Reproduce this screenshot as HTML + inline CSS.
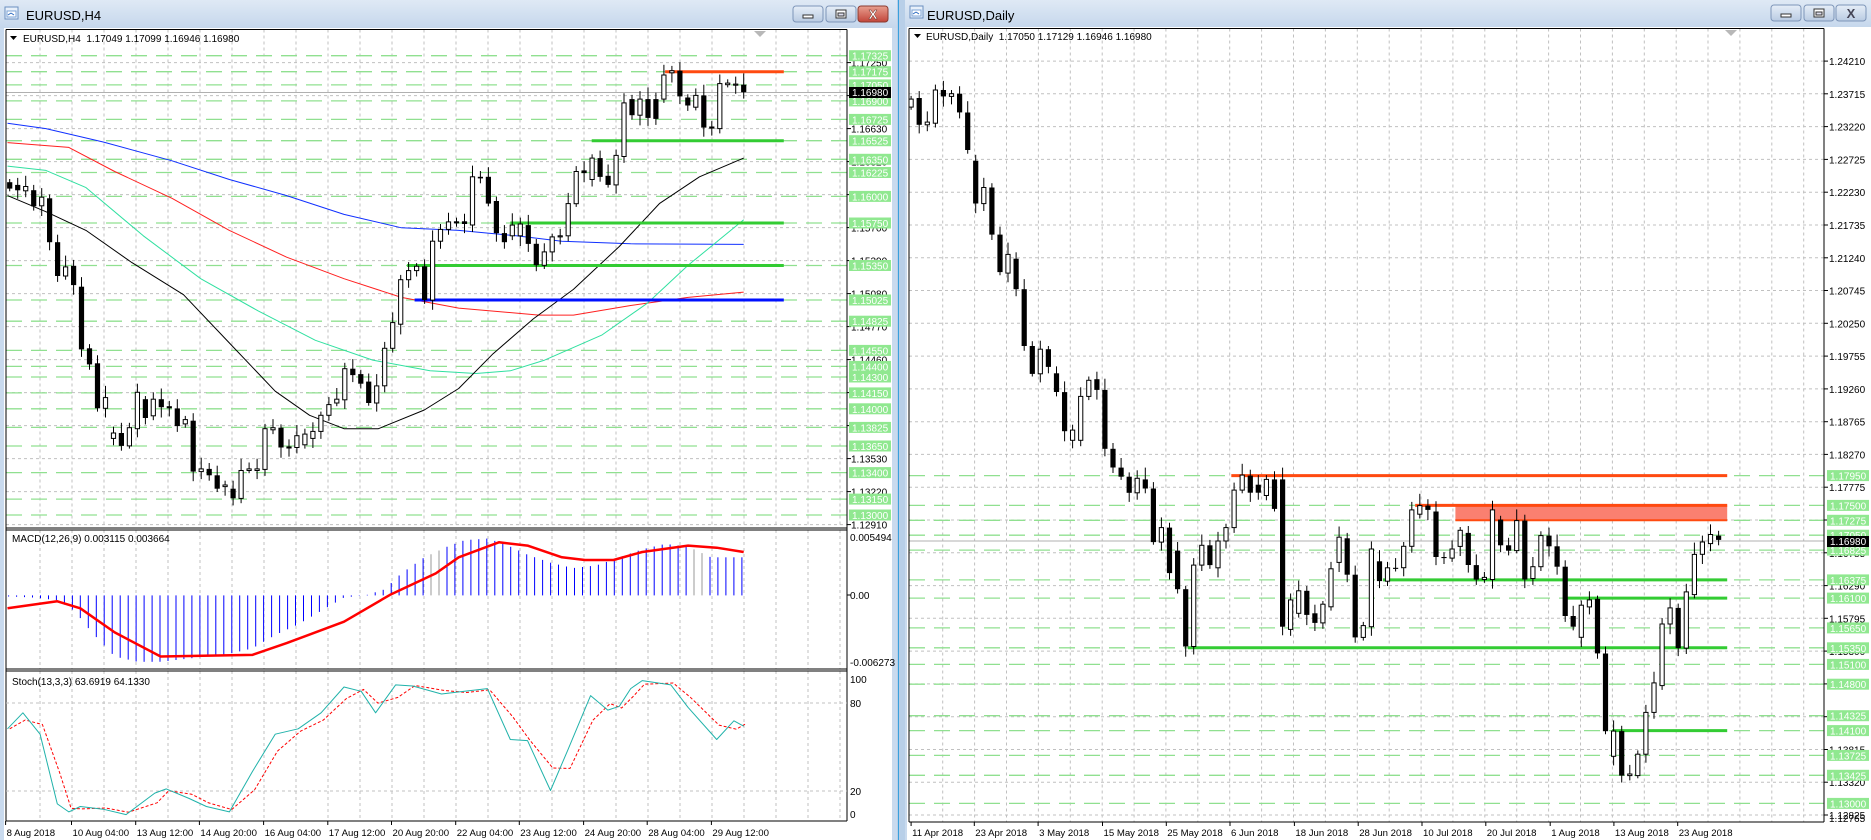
<!DOCTYPE html>
<html><head><meta charset="utf-8">
<style>
html,body{margin:0;padding:0;width:1871px;height:840px;overflow:hidden;background:#c9daee;}
svg{position:absolute;left:0;top:0;font-family:"Liberation Sans",sans-serif;}
</style></head>
<body>
<svg id="s" width="1871" height="840" viewBox="0 0 1871 840" xmlns="http://www.w3.org/2000/svg">
<defs>
<linearGradient id="tb" x1="0" y1="0" x2="0" y2="1"><stop offset="0" stop-color="#dfe9f5"/><stop offset="1" stop-color="#c5d7ec"/></linearGradient>
<linearGradient id="btn" x1="0" y1="0" x2="0" y2="1"><stop offset="0" stop-color="#e6eef8"/><stop offset="1" stop-color="#b9cbe2"/></linearGradient>
<linearGradient id="cls" x1="0" y1="0" x2="0" y2="1"><stop offset="0" stop-color="#e8a090"/><stop offset="1" stop-color="#c2453a"/></linearGradient>
</defs>
<rect x="0" y="0" width="1871" height="840" fill="#c9daee"/>
<rect x="0" y="0" width="897" height="28" fill="url(#tb)"/>
<rect x="905" y="0" width="966" height="28" fill="url(#tb)"/>
<rect x="897" y="0" width="8" height="840" fill="#b8cfe8"/>
<rect x="898" y="0" width="1" height="840" fill="#3aa0dc"/>
<rect x="4" y="28" width="888" height="812" fill="#fff"/>
<rect x="907" y="27" width="964" height="813" fill="#fff"/>
<g id="g"></g>
</svg>
<script>
(function(){
var out=[];
function E(s){out.push(s);}
function line(x1,y1,x2,y2,c,w,d){E('<line x1="'+x1.toFixed(1)+'" y1="'+y1.toFixed(1)+'" x2="'+x2.toFixed(1)+'" y2="'+y2.toFixed(1)+'" stroke="'+c+'" stroke-width="'+(w||1)+'"'+(d?' stroke-dasharray="'+d+'"':'')+'/>');}
function rect(x,y,w,h,f,s){E('<rect x="'+x.toFixed(1)+'" y="'+y.toFixed(1)+'" width="'+w.toFixed(1)+'" height="'+h.toFixed(1)+'" fill="'+f+'"'+(s?' stroke="'+s+'" stroke-width="1"':'')+'/>');}
function text(x,y,t,sz,c,anchor,extra){E('<text x="'+x.toFixed(1)+'" y="'+y.toFixed(1)+'" font-size="'+sz+'" fill="'+c+'"'+(anchor?' text-anchor="'+anchor+'"':'')+(extra||'')+'>'+t+'</text>');}
function poly(pts,fx,fy,c,w,d){var s=pts.map(function(p){return fx(p[0]).toFixed(1)+','+fy(p[1]).toFixed(1)}).join(' ');E('<polyline points="'+s+'" fill="none" stroke="'+c+'" stroke-width="'+(w||1)+'"'+(d?' stroke-dasharray="'+d+'"':'')+' stroke-linejoin="round"/>');}
function icon(x,y){rect(x,y,13,12,'#e8f0fa','#6a8fc0');rect(x+2,y+4,9,6,'#fff','#7ca3d6');line(x+3,y+8,x+6,y+6,'#2a6ac0',1);line(x+6,y+6,x+9,y+8,'#2a6ac0',1);}
function buttons(x0,y0,red){
 var xs=[x0,x0+33,x0+65];
 for(var i=0;i<3;i++){E('<rect x="'+xs[i]+'" y="'+y0+'" width="30" height="16" rx="3" fill="'+(i==2&&red?'url(#cls)':'url(#btn)')+'" stroke="'+(i==2&&red?'#8a3a30':'#7d95b8')+'"/>');}
 rect(xs[0]+10,y0+9,10,3,'#fff','#333');
 rect(xs[1]+10,y0+4,10,8,'#fff','#333');rect(xs[1]+12,y0+7,6,3,'#dde','#333');
 E('<text x="'+(xs[2]+15)+'" y="'+(y0+13)+'" font-size="13" font-weight="bold" text-anchor="middle" fill="'+(red?'#fff':'#445')+'" stroke="'+(red?'#5a2018':'none')+'" stroke-width="0.4">X</text>');
}
icon(5,7);
text(26,20,'EURUSD,H4',13,'#000');
buttons(793,6,true);
var lx=function(x){return x/1.744;}, ly=function(y){return y/1.866;};
var L0=6,L1=847, T=29.5, MB=528, MT=530, MBt=669, ST=671, SB=821;
for(var x=40;x<L1;x+=32){line(x,T,x,MB,'#c0c0c0',1,'3,3');line(x,MT,x,MBt,'#c0c0c0',1,'3,3');line(x,ST,x,SB,'#c0c0c0',1,'3,3');}
function ypL(p){return 524.6-(p-1.12910)*10620;}
for(var k=0;k<15;k++){var y=524.6-33*k; if(y<T+2)break; line(L0,y,L1,y,'#c0c0c0',1,'3,3'); line(L1,y,L1+4,y,'#000',1); text(851,y+4,(1.12910+0.0031*k).toFixed(5),10,'#000');}
var gl=[1.17325,1.17175,1.17050,1.16900,1.16725,1.16525,1.16350,1.16225,1.16000,1.15750,1.15350,1.15025,1.14825,1.14550,1.14400,1.14300,1.14150,1.14000,1.13825,1.13650,1.13400,1.13150,1.13000];
gl.forEach(function(p){var y=ypL(p);line(L0,y,L1,y,'#90e090',1.3,'16,9');});
line(L0,92.5,L1,92.5,'#b0b0b0',1);
poly([[13,230],[80,240],[180,265],[300,300],[400,335],[500,365],[600,400],[700,425],[800,430],[900,440],[980,450],[1100,455],[1297,456]],lx,ly,'#1030ff',1);
poly([[13,266],[120,275],[200,320],[300,370],[400,430],[500,480],[600,520],[700,555],[800,575],[940,588],[1000,588],[1100,570],[1200,555],[1297,545]],lx,ly,'#ff2020',1);
poly([[13,310],[80,318],[150,350],[250,440],[350,520],[450,580],[550,635],[650,672],[750,692],[830,697],[890,692],[950,672],[1050,625],[1130,565],[1200,495],[1297,410]],lx,ly,'#30e0a0',1);
poly([[13,365],[80,395],[150,430],[230,490],[320,550],[400,640],[480,730],[540,775],[600,800],[660,800],[740,765],[800,725],[860,660],[930,595],[1000,540],[1080,460],[1150,380],[1220,330],[1297,295]],lx,ly,'#000',1);
line(lx(1160),ypL(1.17175),lx(1367),ypL(1.17175),'#ff4a10',3);
line(lx(1032),ypL(1.16525),lx(1367),ypL(1.16525),'#33cc33',3);
line(lx(890),ypL(1.15750),lx(1367),ypL(1.15750),'#33cc33',3);
line(lx(710),ypL(1.15350),lx(1367),ypL(1.15350),'#33cc33',3);
line(lx(723),ypL(1.15025),lx(1367),ypL(1.15025),'#0010ff',3);
var CL=[[340,352,'b'],[345,355,'b'],[348,356,'w'],[355,385,'b'],[368,384,'w'],[370,452,'b'],[452,515,'b'],[498,515,'w'],[496,532,'b'],[535,652,'b'],[650,680,'b'],[678,762,'b'],[742,762,'w'],[808,818,'w'],[808,832,'b'],[798,832,'w'],[732,800,'w'],[745,780,'b'],[745,776,'w'],[745,760,'b'],[758,762,'b'],[762,795,'b'],[783,791,'w'],[785,880,'b'],[875,880,'w'],[875,887,'b'],[887,912,'b'],[905,908,'w'],[912,930,'b'],[878,930,'w'],[875,878,'w'],[875,878,'w'],[800,876,'w'],[798,802,'w'],[798,835,'b'],[833,837,'b'],[813,835,'w'],[810,830,'w'],[805,818,'w'],[775,805,'w'],[755,775,'w'],[745,752,'w'],[688,746,'w'],[688,700,'b'],[698,716,'b'],[712,752,'b'],[720,752,'w'],[650,720,'w'],[602,650,'w'],[522,605,'w'],[505,522,'w'],[497,505,'w'],[497,560,'b'],[450,560,'w'],[428,450,'w'],[414,428,'w'],[413,417,'b'],[413,418,'b'],[330,420,'w'],[330,333,'b'],[330,380,'b'],[375,435,'b'],[435,452,'b'],[420,440,'w'],[418,440,'w'],[420,455,'b'],[455,495,'b'],[470,495,'w'],[442,470,'w'],[440,442,'w'],[380,440,'w'],[320,380,'w'],[318,323,'b'],[295,335,'w'],[295,330,'b'],[328,345,'b'],[290,345,'w'],[192,292,'w'],[185,215,'b'],[185,215,'w'],[185,220,'b'],[185,222,'b'],[140,185,'w'],[132,136,'w'],[132,180,'b'],[182,197,'b'],[178,200,'w'],[178,238,'b'],[236,240,'b'],[156,240,'w'],[155,158,'w'],[157,159,'w'],[158,172,'b']];
function candles(arr,fx,fy,x0,x1,hw){
 var n=arr.length;
 arr.forEach(function(c,i){
  var xi=x0+(x1-x0)*i/(n-1), X=fx(xi);
  var wt=6+((i*7)%17), wb=5+((i*11)%15);
  var t=fy(c[0]), b=fy(c[1]);
  line(X,fy(c[0]-wt),X,fy(c[1]+wb),'#000',1);
  if(b-t<1)b=t+1;
  if(c[2]=='b')rect(X-hw,t,hw*2,b-t,'#000');
  else rect(X-hw+0.5,t,hw*2-1,b-t,'#fff','#000');
 });
}
candles(CL,lx,ly,17,1297,2.6);
gl.forEach(function(p){var y=ypL(p);rect(849,y-5.5,42,11,'#90e890');text(852,y+4,p.toFixed(5),10,'#fff');});
rect(849,87,42,11,'#000');text(852,96,'1.16980',10,'#fff');
line(L0,T,L1,T,'#000',1);line(L0,T,L0,SB,'#000',1);line(L1,T,L1,SB,'#000',1);
line(L0,MB,L1,MB,'#000',1);line(L0,MT,L1,MT,'#000',1);line(L0,MBt,L1,MBt,'#000',1);line(L0,ST,L1,ST,'#000',1);line(L0,SB,L1,SB,'#000',1);
E('<polygon points="754,31 766,31 760,37" fill="#b8b8b8"/>');
E('<polygon points="10,36 17,36 13.5,40" fill="#000"/>');
text(23,42,'EURUSD,H4&#160;&#160;1.17049 1.17099 1.16946 1.16980',10,'#000');
var zero=ly(1111);
var hb=[[15,1113],[60,1115],[100,1120],[130,1140],[160,1180],[200,1225],[240,1235],[280,1235],[320,1230],[360,1225],[400,1220],[440,1210],[480,1185],[520,1165],[560,1140],[600,1115],[640,1110],[670,1100],[700,1070],[740,1040],[780,1020],[810,1008],[850,1005],[880,1015],[920,1035],[960,1050],[1000,1060],[1040,1055],[1080,1040],[1120,1025],[1160,1015],[1200,1020],[1240,1040],[1297,1040]];
function interp(a,x){for(var i=0;i<a.length-1;i++){if(x<=a[i+1][0]){var t=(x-a[i][0])/(a[i+1][0]-a[i][0]);return a[i][1]+t*(a[i+1][1]-a[i][1]);}}return a[a.length-1][1];}
for(var xi=15;xi<=1297;xi+=13.9){var yy=interp(hb,xi);var gray=(xi>740&&xi<770)||(xi>1200&&xi<1230);line(lx(xi),zero,lx(xi),ly(yy),gray?'#999':'#0000ff',1);}
poly([[13,1135],[100,1122],[140,1135],[200,1180],[280,1225],[440,1222],[500,1200],[600,1160],[680,1110],[760,1070],[800,1040],[870,1012],[920,1018],[980,1040],[1020,1045],[1070,1045],[1120,1030],[1200,1018],[1250,1022],[1297,1030]],lx,ly,'#ff0000',2.5);
text(12,542,'MACD(12,26,9) 0.003115 0.003664',10,'#000');
text(850,541,'0.005494',10,'#000');text(850,599,'0.00',10,'#000');text(850,666,'-0.006273',10,'#000');
line(L1,595,L1+4,595,'#000',1);
line(L0,703,L1,703,'#c0c0c0',1,'3,3');line(L0,791,L1,791,'#c0c0c0',1,'3,3');
var st=[[13,1360],[40,1330],[70,1370],[100,1500],[120,1515],[140,1505],[180,1510],[220,1520],[270,1480],[290,1472],[330,1490],[360,1505],[400,1515],[440,1440],[480,1370],[520,1360],[560,1330],[600,1282],[630,1290],[655,1330],[690,1278],[720,1280],[770,1295],[810,1290],[850,1285],[890,1380],[920,1382],[960,1475],[990,1400],[1030,1298],[1060,1325],[1080,1318],[1100,1285],[1120,1270],[1170,1278],[1200,1320],[1250,1380],[1280,1345],[1297,1355]];
var sg=st.map(function(p,i){var q=i>0?st[i-1][1]:p[1];return [p[0]+4,(p[1]*0.55+q*0.45)];});
poly(sg,lx,ly,'#ff0000',1,'3,2');
poly(st,lx,ly,'#20b2aa',1);
text(12,685,'Stoch(13,3,3) 63.6919 64.1330',10,'#000');
text(850,683,'100',10,'#000');text(850,707,'80',10,'#000');text(850,795,'20',10,'#000');text(850,818,'0',10,'#000');
var tl=[[4.6,'8 Aug 2018'],[70.5,'10 Aug 04:00'],[134.7,'13 Aug 12:00'],[198.4,'14 Aug 20:00'],[262.6,'16 Aug 04:00'],[326.8,'17 Aug 12:00'],[390.5,'20 Aug 20:00'],[454.7,'22 Aug 04:00'],[518.3,'23 Aug 12:00'],[582.6,'24 Aug 20:00'],[646.2,'28 Aug 04:00'],[710.4,'29 Aug 12:00']];
tl.forEach(function(t){line(t[0]+1,SB,t[0]+1,SB+4,'#000',1);text(t[0]+2,836,t[1],9.6,'#000');});
icon(910,6);
text(927,20,'EURUSD,Daily',13,'#000');
buttons(1771,5,false);
var rx=function(x){return 900+x/1.615;}, ry=function(y){return y/1.867;};
var R0=909,R1=1824,RT=28.5,RB=822;
function ypR(p){return ry(888+(1.1795-p)*12364);}
for(var x=rx(69);x<R1;x+=rx(120.5)-rx(69)){line(x,RT,x,RB,'#c0c0c0',1,'3,3');}
for(var k=0;k<24;k++){var p=1.24210-0.00495*k;var y=ypR(p);if(y>RB-4)break;line(R0,y,R1,y,'#c0c0c0',1,'3,3');line(R1,y,R1+4,y,'#000',1);text(1829,y+4,p.toFixed(5),10,'#000');}
text(1829,822,'1.12765',10,'#000');
var gr=[1.17950,1.17500,1.17275,1.17050,1.16825,1.16375,1.16100,1.15650,1.15350,1.15100,1.14800,1.14325,1.14100,1.13725,1.13425,1.13000];
gr.forEach(function(p){var y=ypR(p);line(R0,y,R1,y,'#90e090',1.3,'16,9');});
line(R0,ry(1010),R1,ry(1010),'#b0b0b0',1);
rect(rx(897),ypR(1.175),rx(1336)-rx(897),ypR(1.17275)-ypR(1.175),'#fa8070');
line(rx(535),ypR(1.1795),rx(1336),ypR(1.1795),'#ff4a10',3);
line(rx(832),ypR(1.175),rx(1336),ypR(1.175),'#ff4a10',3);
line(rx(897),ypR(1.17275),rx(1336),ypR(1.17275),'#ff4a10',2);
line(rx(780),ypR(1.16375),rx(1336),ypR(1.16375),'#33cc33',3);
line(rx(1075),ypR(1.161),rx(1336),ypR(1.161),'#33cc33',3);
line(rx(465),ypR(1.1535),rx(1336),ypR(1.1535),'#33cc33',3);
line(rx(1150),ypR(1.141),rx(1336),ypR(1.141),'#33cc33',3);
var CR=[[185,200,'w'],[183,233,'b'],[228,233,'w'],[168,230,'w'],[168,180,'b'],[175,180,'w'],[175,210,'b'],[210,280,'b'],[300,380,'b'],[350,380,'w'],[350,438,'b'],[438,508,'b'],[475,510,'w'],[483,540,'b'],[540,646,'b'],[646,698,'b'],[652,698,'w'],[652,685,'b'],[697,732,'b'],[732,805,'b'],[803,822,'w'],[740,822,'w'],[710,740,'w'],[708,728,'b'],[728,838,'b'],[838,873,'b'],[873,890,'b'],[890,920,'b'],[893,920,'w'],[895,912,'b'],[912,1012,'b'],[985,1012,'w'],[985,1070,'b'],[1028,1100,'b'],[1100,1207,'b'],[1055,1207,'w'],[1018,1055,'w'],[1018,1055,'b'],[1010,1060,'w'],[985,1010,'w'],[915,985,'w'],[887,915,'w'],[888,920,'b'],[905,920,'b'],[895,925,'w'],[895,950,'b'],[895,1170,'b'],[1120,1175,'w'],[1103,1145,'w'],[1103,1148,'b'],[1145,1163,'b'],[1128,1163,'w'],[1062,1133,'w'],[1003,1050,'w'],[1005,1073,'b'],[1073,1190,'b'],[1168,1190,'w'],[1025,1170,'w'],[1048,1085,'b'],[1060,1085,'w'],[1060,1062,'b'],[1020,1060,'w'],[952,1020,'w'],[944,960,'w'],[944,952,'b'],[955,1040,'b'],[1040,1042,'b'],[1025,1042,'w'],[990,1020,'w'],[995,1055,'b'],[1055,1082,'b'],[1078,1082,'w'],[952,1082,'w'],[970,1018,'b'],[1018,1028,'b'],[972,1028,'w'],[972,1082,'b'],[1058,1080,'w'],[1000,1058,'w'],[1000,1020,'b'],[1020,1058,'b'],[1058,1150,'b'],[1150,1170,'b'],[1130,1190,'w'],[1120,1133,'w'],[1118,1220,'b'],[1220,1365,'b'],[1365,1412,'w'],[1365,1448,'b'],[1445,1448,'w'],[1408,1448,'w'],[1330,1408,'w'],[1275,1330,'w'],[1165,1280,'w'],[1135,1165,'w'],[1135,1210,'b'],[1105,1210,'w'],[1035,1110,'w'],[1012,1035,'w'],[998,1015,'w'],[1000,1008,'b']];
candles(CR,rx,ry,18,1322,2.6);
gr.forEach(function(p){var y=ypR(p);rect(1827,y-5.5,42,11,'#90e890');text(1830,y+4,p.toFixed(5),10,'#fff');});
rect(1827,536,42,11,'#000');text(1830,545,'1.16980',10,'#fff');
line(R0,RT,R1,RT,'#000',1);line(R0,RB,R1,RB,'#000',1);line(R0,RT,R0,RB,'#000',1);line(R1,RT,R1,RB,'#000',1);
E('<polygon points="1725,30 1737,30 1731,36" fill="#b8b8b8"/>');
E('<polygon points="914,34 921,34 917.5,38" fill="#000"/>');
text(926,40,'EURUSD,Daily&#160;&#160;1.17050 1.17129 1.16946 1.16980',10,'#000');
var tr=[[18,'11 Apr 2018'],[120,'23 Apr 2018'],[223,'3 May 2018'],[327,'15 May 2018'],[430,'25 May 2018'],[533,'6 Jun 2018'],[637,'18 Jun 2018'],[740,'28 Jun 2018'],[843,'10 Jul 2018'],[946,'20 Jul 2018'],[1050,'1 Aug 2018'],[1153,'13 Aug 2018'],[1256,'23 Aug 2018']];
tr.forEach(function(t){var X=rx(t[0]);line(X,RB,X,RB+4,'#000',1);text(X+1,836,t[1],9.6,'#000');});
document.getElementById('g').innerHTML=out.join('');
})();
</script>
</body></html>
